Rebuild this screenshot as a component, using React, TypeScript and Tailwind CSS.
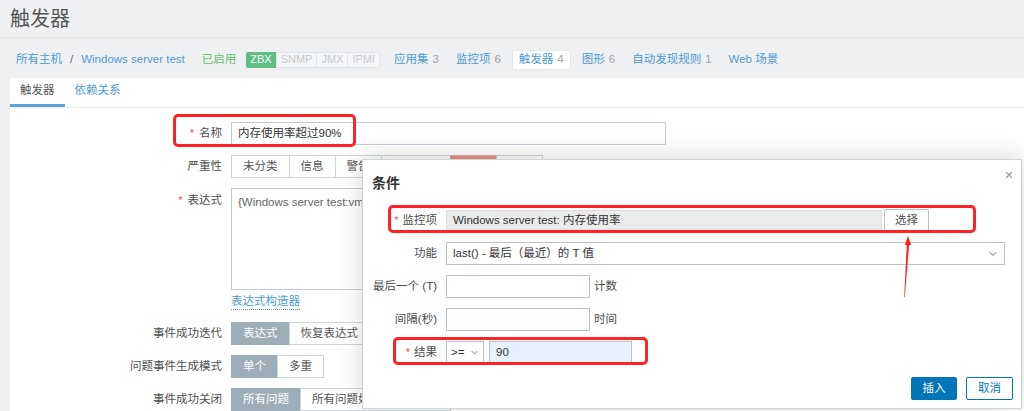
import { ChevronDown, X } from 'lucide-react';

// 触发器编辑页 + 条件弹窗（带红框标注）
interface SegProps {
  items: string[];
  active?: number;
  color?: number;
}

function Seg({ items, active, color }: SegProps) {
  return (
    <div className="flex">
      {items.map((t, i) => (
        <div
          key={t}
          className={`h-[23px] px-[11px] flex items-center border whitespace-nowrap ${i > 0 ? '-ml-px' : ''} ${
            i === active
              ? 'bg-[#9eaeb8] border-[#9eaeb8] text-white'
              : i === color
              ? 'bg-[#e8927c] border-[#d9b0a5] text-white'
              : 'bg-white border-[#cdd6db] text-[#555]'
          }`}
        >
          {t}
        </div>
      ))}
    </div>
  );
}

function FormRow({ label, req, top, children }: { label: string; req?: boolean; top?: boolean; children: React.ReactNode }) {
  return (
    <div className={`flex ${top ? 'items-start' : 'items-center'}`}>
      <div className={`w-[212px] text-right text-[#4d4d4d] ${top ? 'pt-[4px]' : ''}`}>
        {req && <span className="text-[#e45959] mr-[5px] text-[11px]">*</span>}
        {label}
      </div>
      <div className="ml-[9px] flex">{children}</div>
    </div>
  );
}

function DlgRow({ label, req, children }: { label: string; req?: boolean; children: React.ReactNode }) {
  return (
    <div className="flex items-center h-[23px]">
      <div className="w-[74px] text-right text-[#4d4d4d] whitespace-nowrap">
        {req && <span className="text-[#e45959] mr-[4px] text-[11px]">*</span>}
        {label}
      </div>
      <div className="ml-[9px] flex items-center">{children}</div>
    </div>
  );
}

export default function App() {
  const tabs: [string, string][] = [
    ['应用集', '3'],
    ['监控项', '6'],
    ['触发器', '4'],
    ['图形', '6'],
    ['自动发现规则', '1'],
    ['Web 场景', ''],
  ];

  return (
    <div className="relative w-[1024px] h-[411px] overflow-hidden flex flex-col bg-[#eef0f2] text-[11.5px] font-['Liberation_Sans','Noto_Sans_CJK_SC',sans-serif]">
      {/* 标题 */}
      <div className="h-[38px] shrink-0 px-[10px] flex items-center border-b border-[#e2e5e8]">
        <h1 className="text-[20px] text-[#555]">触发器</h1>
      </div>

      {/* 面包屑 + 主机导航 */}
      <div className="h-[40px] shrink-0 pt-[3px] pl-[16px] flex items-center whitespace-nowrap">
        <span className="text-[#4f9bd1]">所有主机</span>
        <span className="mx-[8px] text-[#666]">/</span>
        <span className="text-[#4f9bd1]">Windows server test</span>
        <span className="ml-[17px] text-[#6cbf6c]">已启用</span>
        <div className="ml-[10px] flex h-[16px] text-[11px] leading-none">
          <span className="px-[4px] flex items-center bg-[#5fbd85] text-white rounded-l-[2px]">ZBX</span>
          <span className="px-[4px] flex items-center bg-[#f5f6f7] text-[#c8cbcd] border border-[#e2e5e7]">SNMP</span>
          <span className="px-[4px] flex items-center bg-[#f5f6f7] text-[#c8cbcd] border border-l-0 border-[#e2e5e7]">JMX</span>
          <span className="px-[4px] flex items-center bg-[#f5f6f7] text-[#c8cbcd] border border-l-0 border-[#e2e5e7] rounded-r-[2px]">IPMI</span>
        </div>
        <div className="ml-[8px] flex gap-[5px]">
          {tabs.map(([t, n]) => (
            <div
              key={t}
              className={`h-[20px] px-[6px] flex items-center rounded-[2px] ${t === '触发器' ? 'bg-white border border-[#e4e7e9]' : ''}`}
            >
              <span className="text-[#4f9bd1]">{t}</span>
              {n && <span className="ml-[4px] text-[#a0a4a8]">{n}</span>}
            </div>
          ))}
        </div>
      </div>

      {/* 内容面板 */}
      <div className="ml-[10px] bg-white flex-1">
        <div className="h-[30px] flex border-b border-[#ebeef0]">
          <div className="px-[10px] flex items-center border-b-[3px] border-[#5fa3d6] text-[#555]">触发器</div>
          <div className="px-[10px] flex items-center text-[#4f9bd1] pb-[3px]">依赖关系</div>
        </div>

        <div className="pt-[14px] flex flex-col gap-[10px]">
          <FormRow label="名称" req>
            <div className="w-[435px] h-[23px] px-[6px] flex items-center border border-[#c2cdd3] text-[#333]">内存使用率超过90%</div>
          </FormRow>
          <FormRow label="严重性">
            <Seg items={['未分类', '信息', '警告', '一般严重', '严重', '灾难']} color={4} />
          </FormRow>
          <FormRow label="表达式" req top>
            <div className="w-[435px] h-[102px] px-[6px] pt-[5px] border border-[#c2cdd3] text-[#666] overflow-hidden">
              {'{Windows server test:vm.memory.size[pused].last()}>=90'}
            </div>
          </FormRow>
          <div className="flex -mt-[8px] h-[20px] items-center">
            <div className="w-[212px]" />
            <span className="ml-[9px] text-[#4f9bd1] border-b border-dotted border-[#4f9bd1] leading-[15px]">表达式构造器</span>
          </div>
          <FormRow label="事件成功迭代">
            <Seg items={['表达式', '恢复表达式', '无']} active={0} />
          </FormRow>
          <FormRow label="问题事件生成模式">
            <Seg items={['单个', '多重']} active={0} />
          </FormRow>
          <FormRow label="事件成功关闭">
            <Seg items={['所有问题', '所有问题如果标签值匹配']} active={0} />
          </FormRow>
        </div>
      </div>

      {/* 条件弹窗 */}
      <div className="absolute left-[362px] top-[159px] w-[660px] h-[250px] bg-white border border-[#cdd5d9] shadow-[0_-2px_22px_rgba(0,0,0,0.16)]">
        <X size={10} strokeWidth={3.5} className="absolute right-[7px] top-[10px] text-[#a3aaae]" />
        <div className="pl-[9px] pt-[14px] h-[18px] box-content text-[14px] font-bold text-[#333] leading-[18px]">条件</div>
        <div className="mt-[17px] flex flex-col gap-[10px]">
          <DlgRow label="监控项" req>
            <div className="w-[436px] h-[22px] px-[6px] flex items-center bg-[#ebebeb] border border-[#dcdfe1] text-[#333]">
              Windows server test: 内存使用率
            </div>
            <div className="ml-[2px] w-[45px] h-[23px] flex items-center justify-center border border-[#b7c3c9] rounded-[2px] bg-white text-[#555]">
              选择
            </div>
          </DlgRow>
          <DlgRow label="功能">
            <div className="w-[559px] h-[23px] pl-[6px] pr-[5px] flex items-center justify-between border border-[#b8c5cc] text-[#333]">
              <span>last() - 最后（最近）的 T 值</span>
              <ChevronDown size={12} strokeWidth={1.6} className="text-[#555]" />
            </div>
          </DlgRow>
          <DlgRow label="最后一个 (T)">
            <div className="w-[144px] h-[23px] border border-[#b8c5cc]" />
            <span className="ml-[4px] text-[#4d4d4d]">计数</span>
          </DlgRow>
          <DlgRow label="间隔(秒)">
            <div className="w-[144px] h-[23px] border border-[#b8c5cc]" />
            <span className="ml-[4px] text-[#4d4d4d]">时间</span>
          </DlgRow>
          <DlgRow label="结果" req>
            <div className="w-[38px] h-[23px] pl-[4px] pr-[3px] flex items-center justify-between border border-[#b8c5cc] text-[#333]">
              <span>&gt;=</span>
              <ChevronDown size={11} strokeWidth={1.6} className="text-[#555]" />
            </div>
            <div className="ml-[5px] w-[143px] h-[23px] px-[6px] flex items-center bg-[#e8f0fe] border border-[#b8c5cc] text-[#333]">90</div>
          </DlgRow>
        </div>
        <div className="mt-[13px] pr-[8px] flex justify-end gap-[9px]">
          <div className="w-[46px] h-[23px] flex items-center justify-center bg-[#0275b8] text-white rounded-[2px]">插入</div>
          <div className="w-[47px] h-[23px] flex items-center justify-center border border-[#0275b8] text-[#0275b8] rounded-[2px]">取消</div>
        </div>
      </div>

      {/* 红框标注 */}
      <div className="absolute left-[173px] top-[114px] w-[183px] h-[33px] border-[3px] border-[#ff2222] rounded-[5px]" />
      <div className="absolute left-[388px] top-[205px] w-[588px] h-[28px] border-[3px] border-[#ff2222] rounded-[5px]" />
      <div className="absolute left-[393px] top-[337px] w-[255px] h-[28px] border-[3px] border-[#ff2222] rounded-[5px]" />
      <svg className="absolute left-[896px] top-[232px]" width="20" height="70" viewBox="0 0 20 70">
        <polygon points="12,4 8.8,13 15.2,13" fill="#ff2222" />
        <polygon points="8.2,65 8.8,65 13.2,12 10.8,12" fill="#ff2222" />
      </svg>
    </div>
  );
}
